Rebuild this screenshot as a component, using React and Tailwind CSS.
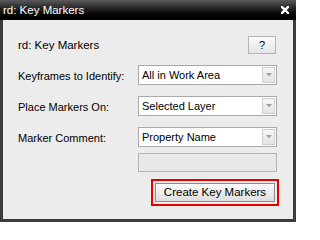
import React from "react";

function Dropdown({ value }) {
  return (
    <div className="flex h-[20px] w-[139px] border border-[#a9a9a9] bg-white">
      <div className="flex flex-1 items-center pl-[3px] pt-[1px] text-black leading-none">{value}</div>
      <div className="my-[1px] mr-[1px] flex w-[13px] items-center justify-center border border-[#cfcfcf] bg-gradient-to-b from-[#f6f6f6] to-[#e4e4e4]">
        <svg width="6" height="4" viewBox="0 0 6 4">
          <path d="M0 0 L6 0 L3 3.5 Z" fill="#a0a0a0" />
        </svg>
      </div>
    </div>
  );
}

function Row({ label, value }) {
  return (
    <div className="flex items-center">
      <div className="w-[120px] pt-[2px] text-black leading-none">{label}</div>
      <Dropdown value={value} />
    </div>
  );
}

export default function App() {
  return (
    <div
      className="flex h-[222px] w-[296px] flex-col bg-[#3c3c3c] text-[11px]"
      style={{ fontFamily: '"Liberation Sans", Arial, sans-serif' }}
    >
      <div className="flex h-[20px] items-center justify-between bg-gradient-to-b from-[#5a5a5a] via-[#1c1c1c] to-[#000000] pl-[3px] pr-[7px]">
        <span className="pt-[1px] text-[11.5px] leading-none text-white">rd: Key Markers</span>
        <svg width="8" height="8" viewBox="0 0 8 8">
          <path d="M1 1 L7 7 M7 1 L1 7" stroke="#ffffff" strokeWidth="2.4" strokeLinecap="square" />
        </svg>
      </div>
      <div className="mx-[3px] mb-[3px] flex flex-1 flex-col bg-[#ececec] pl-[15px] pr-[16px] pt-[16px]">
        <div className="flex h-[18px] items-center justify-between">
          <span className="pt-[1px] text-[11.5px] text-black">rd: Key Markers</span>
          <div className="mr-[1px] flex h-[18px] w-[28px] items-center justify-center border border-[#b4b4b4] bg-gradient-to-b from-[#fbfbfb] to-[#e4e4e4] text-black">
            ?
          </div>
        </div>
        <div className="mt-[11px] flex flex-col gap-[11px]">
          <Row label="Keyframes to Identify:" value="All in Work Area" />
          <Row label="Place Markers On:" value="Selected Layer" />
          <Row label="Marker Comment:" value="Property Name" />
        </div>
        <div className="mt-[6px] flex">
          <div className="ml-[120px] h-[19px] w-[139px] border border-[#b4b4b4] bg-[#e8e8e8]" />
        </div>
        <div className="mt-[11px] flex justify-end pr-[2px]">
          <div className="flex h-[19px] w-[120px] items-center justify-center border border-[#8e8e8e] bg-gradient-to-b from-[#fbfbfb] to-[#dedede] pt-[1px] text-[11.5px] text-black outline-2 outline-offset-[2px] outline-[#e60000]">
            Create Key Markers
          </div>
        </div>
      </div>
    </div>
  );
}
